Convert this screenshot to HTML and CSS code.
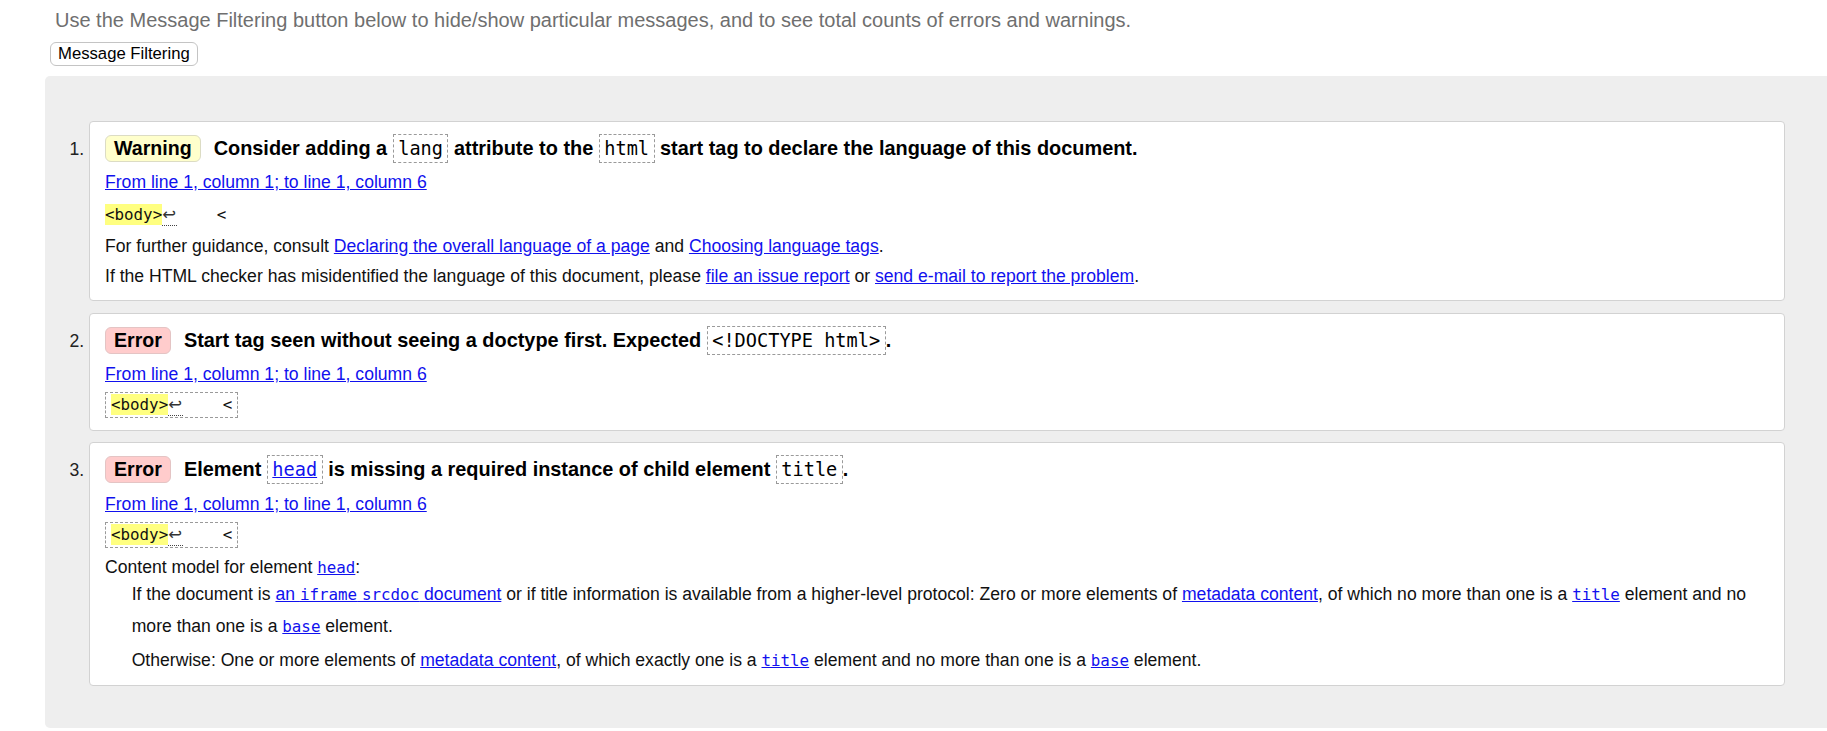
FILE: index.html
```html
<!DOCTYPE html>
<html lang="en">
<head>
<meta charset="utf-8">
<title>Checker messages</title>
<link rel="stylesheet" href="styles.css">
</head>
<body>
<header class="top">
  <p class="intro">Use the Message Filtering button below to hide/show particular messages, and to see total counts of errors and warnings.</p>
  <button class="filter-btn" type="button">Message Filtering</button>
</header>
<section class="results">
  <ol class="messages">
    <li class="msg">
      <p class="msg-head"><strong class="badge badge-warning">Warning</strong><span>Consider adding a <code class="tag">lang</code> attribute to the <code class="tag">html</code> start tag to declare the language of this document.</span></p>
      <p class="location"><a href="#">From line 1, column 1; to line 1, column 6</a></p>
      <p class="extract extract-plain"><code><b>&lt;body&gt;</b><span class="lf">↩</span>    &lt;</code></p>
      <p class="after">For further guidance, consult <a href="#">Declaring the overall language of a page</a> and <a href="#">Choosing language tags</a>.</p>
      <p>If the HTML checker has misidentified the language of this document, please <a href="#">file an issue report</a> or <a href="#">send e-mail to report the problem</a>.</p>
    </li>
    <li class="msg">
      <p class="msg-head"><strong class="badge badge-error">Error</strong><span>Start tag seen without seeing a doctype first. Expected <code class="tag">&lt;!DOCTYPE html&gt;</code>.</span></p>
      <p class="location"><a href="#">From line 1, column 1; to line 1, column 6</a></p>
      <p class="extract"><code><b>&lt;body&gt;</b><span class="lf">↩</span>    &lt;</code></p>
    </li>
    <li class="msg">
      <p class="msg-head"><strong class="badge badge-error">Error</strong><span>Element <code class="tag"><a href="#">head</a></code> is missing a required instance of child element <code class="tag">title</code>.</span></p>
      <p class="location"><a href="#">From line 1, column 1; to line 1, column 6</a></p>
      <p class="extract"><code><b>&lt;body&gt;</b><span class="lf">↩</span>    &lt;</code></p>
      <dl class="model">
        <dt>Content model for element <a href="#"><code>head</code></a>:</dt>
        <dd>
          <p class="model-first">If the document is <a href="#">an <code>iframe</code> <code>srcdoc</code> document</a> or if title information is available from a higher-level protocol: Zero or more elements of <a href="#">metadata content</a>, of which no more than one is a <a href="#"><code>title</code></a> element and no more than one is a <a href="#"><code>base</code></a> element.</p>
          <p class="model-next">Otherwise: One or more elements of <a href="#">metadata content</a>, of which exactly one is a <a href="#"><code>title</code></a> element and no more than one is a <a href="#"><code>base</code></a> element.</p>
        </dd>
      </dl>
    </li>
  </ol>
</section>
</body>
</html>
```

FILE: styles.css
```css
* {
  box-sizing: border-box;
}

html,
body {
  margin: 0;
  padding: 0;
}

body {
  font-family: "Liberation Sans", Arial, sans-serif;
  font-size: 17.6px;
  color: #111;
  background: #fff;
}

a {
  color: #1111ee;
  text-decoration: underline;
}

code {
  font-family: "DejaVu Sans Mono", "Liberation Mono", monospace;
  font-size: 15.84px;
}

/* top area */
.top {
  padding: 8px 0 0 50px;
}

.intro {
  margin: 0 0 0 5px;
  font-size: 20px;
  line-height: 24px;
  color: #6f6f6f;
}

.filter-btn {
  display: block;
  margin: 10px 0 0;
  height: 24px;
  padding: 0 7px;
  font-family: "Liberation Sans", Arial, sans-serif;
  font-size: 16.7px;
  line-height: 22px;
  color: #000;
  background: #fff;
  border: 1px solid #c4c4c4;
  border-radius: 6px;
}

/* results panel */
.results {
  margin: 10px 0 0 45px;
  padding: 44.7px 42px 42px 44px;
  background: #eeeeee;
  border-radius: 5px 0 0 5px;
}

.messages {
  margin: 0;
  padding: 0;
  list-style: decimal outside;
}

.msg {
  background: #fff;
  border: 1px solid #d2d2d2;
  border-radius: 4px;
  padding: 10px 15px 9px;
  color: #111;
}

.msg + .msg {
  margin-top: 11.7px;
}

.msg::marker {
  color: #222;
}

.msg p {
  margin: 0;
  line-height: 30px;
}

.msg .msg-head {
  font-size: 19.9px;
  font-weight: bold;
  line-height: 32px;
  color: #000;
}

.badge {
  display: inline-block;
  height: 27px;
  line-height: 25px;
  padding: 0 8px;
  margin-right: 13px;
  border: 1px solid #d9d9c0;
  border-radius: 6px;
  font-size: 19.6px;
  font-weight: bold;
}

.badge-warning {
  background: #ffffcc;
  border-color: #dcdcc4;
}

.badge-error {
  background: #ffcccc;
  border-color: #e4c4c4;
}

.tag {
  display: inline-block;
  font-size: 18.6px;
  font-weight: normal;
  line-height: 27px;
  padding: 0 4.5px;
  border: 1px dashed #9a9a9a;
  color: #000;
}

.msg .location {
  margin-top: 3.2px;
}

.msg .extract {
  width: fit-content;
  height: 26px;
  margin: 3px 0;
  padding: 0 5px;
  border: 1px dashed #9a9a9a;
  line-height: 24px;
  font-family: "DejaVu Sans Mono", "Liberation Mono", monospace;
  font-size: 15.84px;
  white-space: pre;
}

.msg .extract-plain {
  border: none;
  padding: 3px 0 0;
}

.extract code {
  line-height: 24px;
}

.extract b {
  font-weight: normal;
  background: #ffff80;
  padding: 1px 0;
}

.lf {
  padding: 0 1px 1px 0;
  margin-right: 1.5px;
  border-bottom: 1px dotted #444;
  font-family: "DejaVu Sans", "DejaVu Sans Mono", sans-serif;
  font-size: 16.5px;
  color: #333;
}

.msg .after {
  margin-top: 5px;
}

/* content model */
.model {
  margin: 8.7px 0 0;
}

.model dt {
  line-height: 22px;
}

.model dd {
  margin: 0 19px 0 26.7px;
}

.model code {
  line-height: 1;
}

.msg .model-first {
  line-height: 32px;
}

.msg .model-next {
  margin-top: 2px;
  line-height: 32px;
}
```
